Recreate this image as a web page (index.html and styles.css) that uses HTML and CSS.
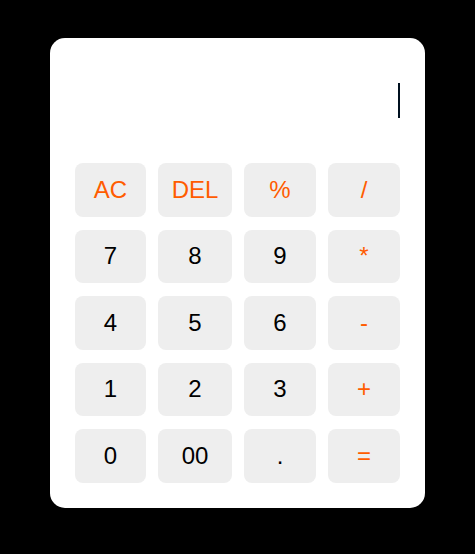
FILE: index.html
```html
<!DOCTYPE html>
<html>
<head>
<meta charset="utf-8">
<link rel="stylesheet" href="styles.css">
</head>
<body>
<div class="calc">
  <div class="display"><span class="caret"></span></div>
  <div class="keys">
    <div class="key op">AC</div>
    <div class="key op">DEL</div>
    <div class="key op">%</div>
    <div class="key op">/</div>
    <div class="key">7</div>
    <div class="key">8</div>
    <div class="key">9</div>
    <div class="key op">*</div>
    <div class="key">4</div>
    <div class="key">5</div>
    <div class="key">6</div>
    <div class="key op">-</div>
    <div class="key">1</div>
    <div class="key">2</div>
    <div class="key">3</div>
    <div class="key op">+</div>
    <div class="key">0</div>
    <div class="key">00</div>
    <div class="key">.</div>
    <div class="key op">=</div>
  </div>
</div>
</body>
</html>
```
FILE: styles.css
```css
html, body {
  margin: 0;
  padding: 0;
  background: #000;
}
body {
  width: 475px;
  height: 554px;
  padding-top: 38px;
  box-sizing: border-box;
  font-family: "Liberation Sans", Arial, sans-serif;
}
.calc {
  margin-left: 50px;
  width: 375px;
  height: 470px;
  box-sizing: border-box;
  background: #fff;
  border-radius: 15px;
  padding: 25px 25px 0 25px;
}
.display {
  height: 87px;
  margin-bottom: 13px;
  padding-top: 20px;
  box-sizing: border-box;
  display: flex;
  justify-content: flex-end;
  align-items: flex-start;
}
.caret {
  display: block;
  width: 2px;
  height: 35px;
  background: #00101f;
}
.keys {
  display: grid;
  grid-template-columns: 71px 74px 72px 72px;
  grid-auto-rows: 53.5px;
  column-gap: 12px;
  row-gap: 13px;
}
.key {
  background: #eeeeee;
  border-radius: 8px;
  display: flex;
  align-items: center;
  justify-content: center;
  font-size: 24px;
  color: #000;
}
.key.op {
  color: #ff5c00;
}
```
